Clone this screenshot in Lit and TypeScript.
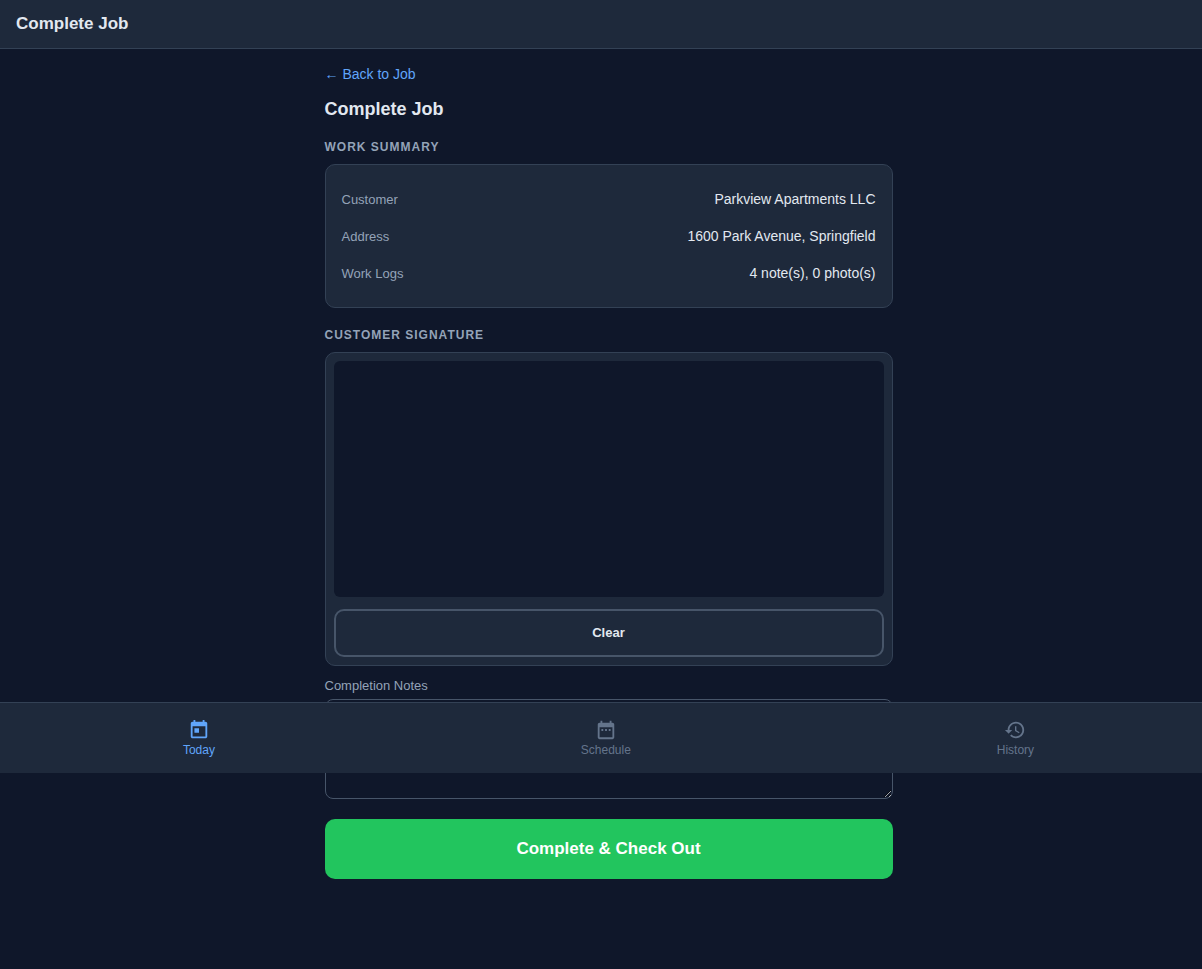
import { LitElement, html, css, svg } from "lit";
import { customElement, state } from "lit/decorators.js";

const icons = {
  today: svg`<path d="M19 3h-1V1h-2v2H8V1H6v2H5c-1.11 0-1.99.9-1.99 2L3 19c0 1.1.89 2 2 2h14c1.1 0 2-.9 2-2V5c0-1.1-.9-2-2-2zm0 16H5V8h14v11zM7 10h5v5H7z"/>`,
  schedule: svg`<path d="M9 11H7v2h2v-2zm4 0h-2v2h2v-2zm4 0h-2v2h2v-2zm2-7h-1V2h-2v2H8V2H6v2H5c-1.11 0-1.99.9-1.99 2L3 20c0 1.1.89 2 2 2h14c1.1 0 2-.9 2-2V6c0-1.1-.9-2-2-2zm0 16H5V9h14v11z"/>`,
  history: svg`<path d="M13 3c-4.97 0-9 4.03-9 9H1l3.89 3.89.07.14L9 12H6c0-3.87 3.13-7 7-7s7 3.13 7 7-3.13 7-7 7c-1.93 0-3.68-.79-4.94-2.06l-1.42 1.42C8.27 19.99 10.51 21 13 21c4.97 0 9-4.03 9-9s-4.03-9-9-9zm-1 5v5l4.28 2.54.72-1.21-3.5-2.08V8H12z"/>`,
};

@customElement("app-root")
export class AppRoot extends LitElement {
  static styles = css`
    :host {
      display: block;
      min-height: 100vh;
      overflow-x: clip;
      background: #0f172a;
      color: #e2e8f0;
      font-family: "Liberation Sans", Arial, sans-serif;
      font-size: 14px;
    }
    * {
      box-sizing: border-box;
    }
    .shell {
      margin-right: -15px;
    }
    .topbar {
      padding: 12px 16px;
      background: #1e293b;
      border-bottom: 1px solid #334155;
    }
    .topbar-title {
      margin: 0;
      font-size: 17px;
      line-height: 24px;
    }
    .content {
      max-width: 600px;
      margin: 0 auto;
      padding: 16px 16px 90px;
    }
    .back {
      display: block;
      width: fit-content;
      margin-bottom: 12px;
      line-height: 19px;
      color: #60a5fa;
      text-decoration: none;
    }
    .title {
      margin: 0 0 16px;
      font-size: 18px;
      line-height: 26px;
    }
    .section {
      margin: 0 0 8px;
      font-size: 12px;
      line-height: 18px;
      letter-spacing: 1px;
      text-transform: uppercase;
      color: #94a3b8;
    }
    .card {
      background: #1e293b;
      border: 1px solid #334155;
      border-radius: 10px;
    }
    .summary {
      margin: 0 0 18px;
      padding: 16px;
    }
    .row {
      display: flex;
      justify-content: space-between;
      align-items: center;
      padding: 8px 0;
      line-height: 20px;
      border-bottom: 1px solid #1e293b;
    }
    .row:last-child {
      border-bottom: 0;
    }
    .row-label {
      font-size: 13px;
      line-height: 19px;
      color: #94a3b8;
    }
    .row-value {
      margin: 0;
      text-align: right;
    }
    .signature {
      display: flex;
      flex-direction: column;
      gap: 12px;
      margin-bottom: 10px;
      padding: 8px;
    }
    .pad {
      display: block;
      width: 100%;
      height: 236px;
      border-radius: 6px;
      background: #0f172a;
      touch-action: none;
    }
    .clear {
      height: 48px;
      border: 2px solid #475569;
      border-radius: 10px;
      background: transparent;
      color: #e2e8f0;
      font: bold 13px/16px "Liberation Sans", Arial, sans-serif;
      cursor: pointer;
    }
    .notes-label {
      display: block;
      margin-bottom: 4px;
      font-size: 13px;
      line-height: 19px;
      color: #94a3b8;
    }
    .notes {
      display: block;
      width: 100%;
      height: 100px;
      margin-bottom: 20px;
      padding: 12px;
      border: 1px solid #475569;
      border-radius: 8px;
      background: #0f172a;
      color: #e2e8f0;
      font: 14px "Liberation Sans", Arial, sans-serif;
      resize: vertical;
    }
    .submit {
      display: block;
      width: 100%;
      height: 60px;
      border: 0;
      border-radius: 10px;
      background: #22c55e;
      color: #ffffff;
      font: bold 17px "Liberation Sans", Arial, sans-serif;
      cursor: pointer;
    }
    .tabs {
      position: fixed;
      left: 0;
      right: -15px;
      bottom: 196px;
      display: flex;
      justify-content: space-around;
      padding: 16px 0;
      background: #1e293b;
      border-top: 1px solid #334155;
    }
    .tab {
      display: flex;
      flex-direction: column;
      align-items: center;
      gap: 2px;
      font-size: 12px;
      line-height: 14px;
      color: #64748b;
      text-decoration: none;
    }
    .tab.active {
      color: #60a5fa;
    }
    .icon {
      width: 22px;
      height: 22px;
      fill: currentColor;
    }
  `;

  @state() private drawing = false;

  private get pad() {
    return this.renderRoot.querySelector("canvas") as HTMLCanvasElement;
  }

  private point(e: PointerEvent) {
    const box = this.pad.getBoundingClientRect();
    return [
      ((e.clientX - box.left) * this.pad.width) / box.width,
      ((e.clientY - box.top) * this.pad.height) / box.height,
    ] as const;
  }

  private startStroke(e: PointerEvent) {
    const ctx = this.pad.getContext("2d")!;
    this.drawing = true;
    ctx.strokeStyle = "#e2e8f0";
    ctx.lineWidth = 2;
    ctx.beginPath();
    ctx.moveTo(...this.point(e));
  }

  private extendStroke(e: PointerEvent) {
    if (!this.drawing) return;
    const ctx = this.pad.getContext("2d")!;
    ctx.lineTo(...this.point(e));
    ctx.stroke();
  }

  private endStroke() {
    this.drawing = false;
  }

  private clear() {
    this.pad.getContext("2d")!.clearRect(0, 0, this.pad.width, this.pad.height);
  }

  private row(label: string, value: string) {
    return html`<div class="row">
      <dt class="row-label">${label}</dt>
      <dd class="row-value">${value}</dd>
    </div>`;
  }

  private tab(label: string, icon: unknown, active = false) {
    return html`<a class="tab ${active ? "active" : ""}" href="#${label.toLowerCase()}">
      <svg class="icon" viewBox="0 0 24 24" aria-hidden="true">${icon}</svg>
      <span>${label}</span>
    </a>`;
  }

  render() {
    return html`
      <div class="shell">
        <header class="topbar"><h1 class="topbar-title">Complete Job</h1></header>
        <main class="content">
          <a class="back" href="#job">← Back to Job</a>
          <h2 class="title">Complete Job</h2>
          <h3 class="section">Work Summary</h3>
          <dl class="card summary">
            ${this.row("Customer", "Parkview Apartments LLC")}
            ${this.row("Address", "1600 Park Avenue, Springfield")}
            ${this.row("Work Logs", "4 note(s), 0 photo(s)")}
          </dl>
          <h3 class="section">Customer Signature</h3>
          <div class="card signature">
            <canvas
              class="pad"
              width="550"
              height="236"
              @pointerdown=${this.startStroke}
              @pointermove=${this.extendStroke}
              @pointerup=${this.endStroke}
              @pointerleave=${this.endStroke}
            ></canvas>
            <button class="clear" type="button" @click=${this.clear}>Clear</button>
          </div>
          <label class="notes-label" for="notes">Completion Notes</label>
          <textarea class="notes" id="notes"></textarea>
          <button class="submit" type="button">Complete &amp; Check Out</button>
        </main>
      </div>
      <nav class="tabs">
        ${this.tab("Today", icons.today, true)}
        ${this.tab("Schedule", icons.schedule)}
        ${this.tab("History", icons.history)}
      </nav>
    `;
  }
}
